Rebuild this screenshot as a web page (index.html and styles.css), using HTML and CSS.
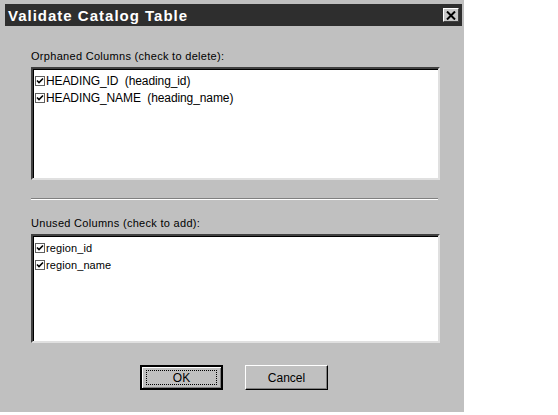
FILE: index.html
```html
<!DOCTYPE html>
<html>
<head>
<meta charset="utf-8">
<link rel="stylesheet" href="styles.css">
</head>
<body>
<div class="dialog">
  <div class="titlebar">
    <span class="title">Validate Catalog Table</span>
    <span class="close"><svg width="10" height="9" viewBox="0 0 10 9"><path d="M1 0.5 L9 8.5 M9 0.5 L1 8.5" stroke="#000" stroke-width="2"/></svg></span>
  </div>
  <div class="content">
    <div class="label">Orphaned Columns (check to delete):</div>
    <div class="listbox list1">
      <div class="item"><span class="check"><svg width="8" height="8" viewBox="0 0 8 8"><path d="M1 3.5 L3 5.5 L7 1.5" stroke="#000" stroke-width="1.6" fill="none"/></svg></span><span class="itext">HEADING_ID&nbsp; (heading_id)</span></div>
      <div class="item"><span class="check"><svg width="8" height="8" viewBox="0 0 8 8"><path d="M1 3.5 L3 5.5 L7 1.5" stroke="#000" stroke-width="1.6" fill="none"/></svg></span><span class="itext">HEADING_NAME&nbsp; (heading_name)</span></div>
    </div>
    <div class="sep"></div>
    <div class="label label2">Unused Columns (check to add):</div>
    <div class="listbox list2">
      <div class="item small"><span class="check"><svg width="8" height="8" viewBox="0 0 8 8"><path d="M1 3.5 L3 5.5 L7 1.5" stroke="#000" stroke-width="1.6" fill="none"/></svg></span><span class="itext">region_id</span></div>
      <div class="item small"><span class="check"><svg width="8" height="8" viewBox="0 0 8 8"><path d="M1 3.5 L3 5.5 L7 1.5" stroke="#000" stroke-width="1.6" fill="none"/></svg></span><span class="itext">region_name</span></div>
    </div>
    <div class="buttons">
      <div class="btn default"><span class="focus">OK</span></div>
      <div class="btn">Cancel</div>
    </div>
  </div>
</div>
</body>
</html>
```
FILE: styles.css
```css
html, body {
  margin: 0;
  padding: 0;
  background: #ffffff;
}
.dialog {
  width: 464px;
  height: 412px;
  box-sizing: border-box;
  background: #c0c0c0;
  padding: 4px 2px 0 5px;
  font-family: "Liberation Sans", Arial, sans-serif;
  font-size: 11px;
  color: #000;
}
.titlebar {
  height: 22px;
  background: #2e2e2e;
  display: flex;
  align-items: center;
  justify-content: space-between;
  padding: 0 3px 0 3px;
}
.title {
  color: #ffffff;
  font-weight: bold;
  font-size: 15px;
  letter-spacing: 1px;
}
.close {
  width: 16px;
  height: 14px;
  box-sizing: border-box;
  background: #c8c8c8;
  border: 1px solid;
  border-color: #ffffff #404040 #404040 #ffffff;
  display: flex;
  align-items: center;
  justify-content: center;
}
.content {
  padding: 0 0 0 26px;
}
.label {
  margin-top: 23px;
  height: 14px;
  line-height: 14px;
  letter-spacing: 0.3px;
}
.listbox {
  width: 409px;
  box-sizing: border-box;
  background: #ffffff;
  border: 2px solid;
  border-color: #404040 #e0e0e0 #e0e0e0 #404040;
  box-shadow: inset 1px 1px 0 #000;
  padding: 3px 0 0 2px;
  margin-top: 4px;
}
.list1 { height: 113px; }
.list2 { height: 109px; margin-top: 4px; }
.item {
  display: flex;
  align-items: center;
  height: 17px;
  font-size: 12px;
  letter-spacing: -0.1px;
}
.item.small { font-size: 11px; letter-spacing: 0.1px; }
.check {
  width: 10px;
  height: 10px;
  box-sizing: border-box;
  border: 1px solid #606060;
  background: #fff;
  display: flex;
  align-items: center;
  justify-content: center;
  margin-right: 1px;
}
.sep {
  width: 407px;
  height: 1px;
  background: #808080;
  border-bottom: 1px solid #ffffff;
  margin-top: 18px;
}
.label2 { margin-top: 16px; }
.buttons {
  display: flex;
  gap: 22px;
  margin: 22px 0 0 109px;
}
.btn {
  width: 83px;
  height: 25px;
  box-sizing: border-box;
  border: 1px solid;
  border-color: #ffffff #000 #000 #ffffff;
  box-shadow: inset -1px -1px 0 #808080;
  display: flex;
  align-items: center;
  justify-content: center;
  font-size: 12px;
}
.btn.default {
  border: 2px solid #000;
  box-shadow: inset 1px 1px 0 #fff, inset -1px -1px 0 #808080;
}
.focus {
  width: 71px;
  height: 15px;
  box-sizing: border-box;
  border: 1px dotted #000;
  display: flex;
  align-items: center;
  justify-content: center;
}
```
